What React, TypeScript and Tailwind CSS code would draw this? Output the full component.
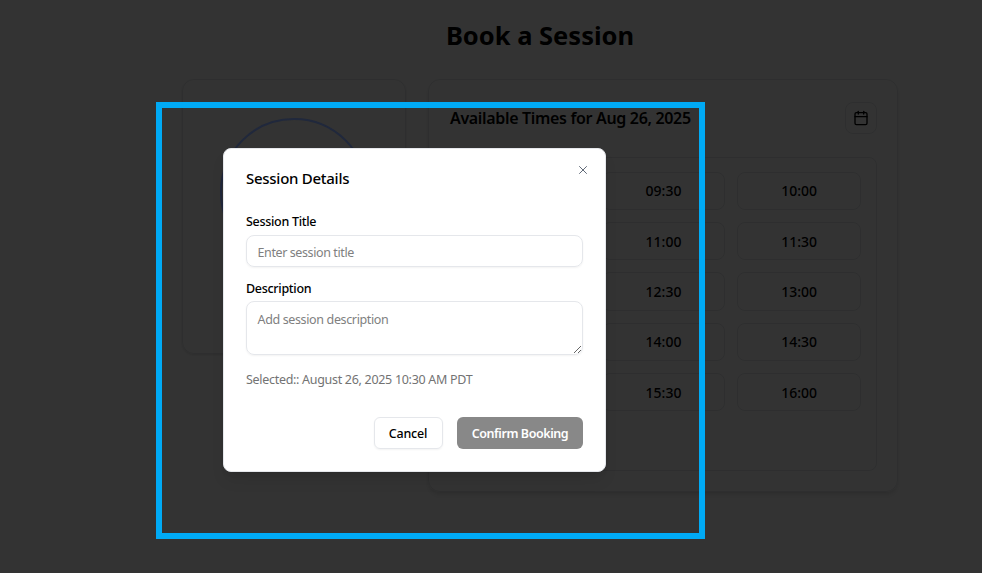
import { Calendar, X } from 'lucide-react';

const times = [
  '09:00', '09:30', '10:00',
  '10:30', '11:00', '11:30',
  '12:00', '12:30', '13:00',
  '13:30', '14:00', '14:30',
  '15:00', '15:30', '16:00',
];

export default function App() {
  return (
    <div className="relative h-[573px] w-[982px] overflow-hidden bg-white font-['Noto_Sans',sans-serif] text-black">
      {/* Page behind the dialog */}
      <div className="ml-[182px] w-[716px] pt-[16px]">
        <h1 className="text-center text-[25.5px] font-bold leading-[38px]">Book a Session</h1>

        <div className="mt-[25px] flex items-start gap-[22px]">
          {/* Calendar card */}
          <div className="flex h-[275px] w-[224px] justify-center rounded-xl border border-gray-200 pt-[38px] shadow-sm">
            <div className="relative z-10 h-[148px] w-[148px] rounded-full border-2 border-[#20283c]"></div>
          </div>

          {/* Times card */}
          <div className="h-[413px] w-[470px] rounded-xl border border-gray-200 pl-[21px] pr-[20px] pt-[22px] shadow-md">
            <div className="flex items-center justify-between">
              <h2 className="pb-[1px] text-[16px] font-semibold tracking-[-0.33px]">Available Times for Aug 26, 2025</h2>
              <button className="flex h-[32px] w-[32px] items-center justify-center rounded-lg border border-gray-200">
                <Calendar className="h-4 w-4" />
              </button>
            </div>
            <div className="mt-[23px] h-[314px] rounded-lg border border-gray-200 px-[15px] pt-[13.5px]">
              <div className="grid grid-cols-3 gap-x-3 gap-y-3">
                {times.map((time) => (
                  <button key={time} className="h-[38.4px] rounded-lg border border-gray-200 text-[14px] font-medium">
                    {time}
                  </button>
                ))}
              </div>
            </div>
          </div>
        </div>
      </div>

      {/* Overlay */}
      <div className="absolute inset-0 bg-black/80"></div>

      {/* Dialog */}
      <div className="absolute left-[223px] top-[148px] z-20 h-[324px] w-[383px] rounded-lg border border-gray-200 bg-white px-[22px] pt-[19px] shadow-lg">
        <button className="absolute right-[15px] top-[14px] text-gray-600">
          <X className="h-[14px] w-[14px]" strokeWidth={1.5} />
        </button>
        <h3 className="text-[15px] font-medium leading-[21px] tracking-[-0.27px]">Session Details</h3>

        <label className="mt-[23px] block text-[12.5px] font-medium leading-[20px] tracking-[-0.3px]">Session Title</label>
        <input
          placeholder="Enter session title"
          className="mt-[3px] h-[32px] w-full rounded-lg border border-gray-200 px-[10.5px] pt-[2px] text-[12.5px] tracking-[-0.4px] shadow-xs outline-none placeholder:text-[#808080]"
        />

        <label className="mt-[12px] block text-[12.5px] font-medium leading-[20px] tracking-[-0.3px]">Description</label>
        <textarea
          placeholder="Add session description"
          className="mt-[2px] block h-[54px] w-full rounded-lg border border-gray-200 px-[10.5px] pb-[7px] pt-[8px] text-[12.5px] leading-[20px] tracking-[-0.36px] shadow-xs outline-none placeholder:text-[#808080]"
        />

        <p className="mt-[15px] text-[12.5px] leading-[20px] tracking-[-0.3px] text-[#737373]">Selected:: August 26, 2025 10:30 AM PDT</p>

        <div className="mt-[27px] flex justify-end gap-[14px]">
          <button className="h-[32px] w-[69px] rounded-md border border-gray-200 pr-[1px] pt-[2px] text-[12.5px] font-medium tracking-[-0.2px] shadow-xs">
            Cancel
          </button>
          <button className="h-[32px] w-[126px] rounded-md bg-[#888888] pt-[2px] text-[12.5px] font-semibold tracking-[-0.42px] text-white">
            Confirm Booking
          </button>
        </div>
      </div>

      {/* Highlight frame */}
      <div className="absolute left-[156px] top-[102px] z-20 h-[437px] w-[549px] border-[6px] border-[#00aaf5]"></div>
    </div>
  );
}
